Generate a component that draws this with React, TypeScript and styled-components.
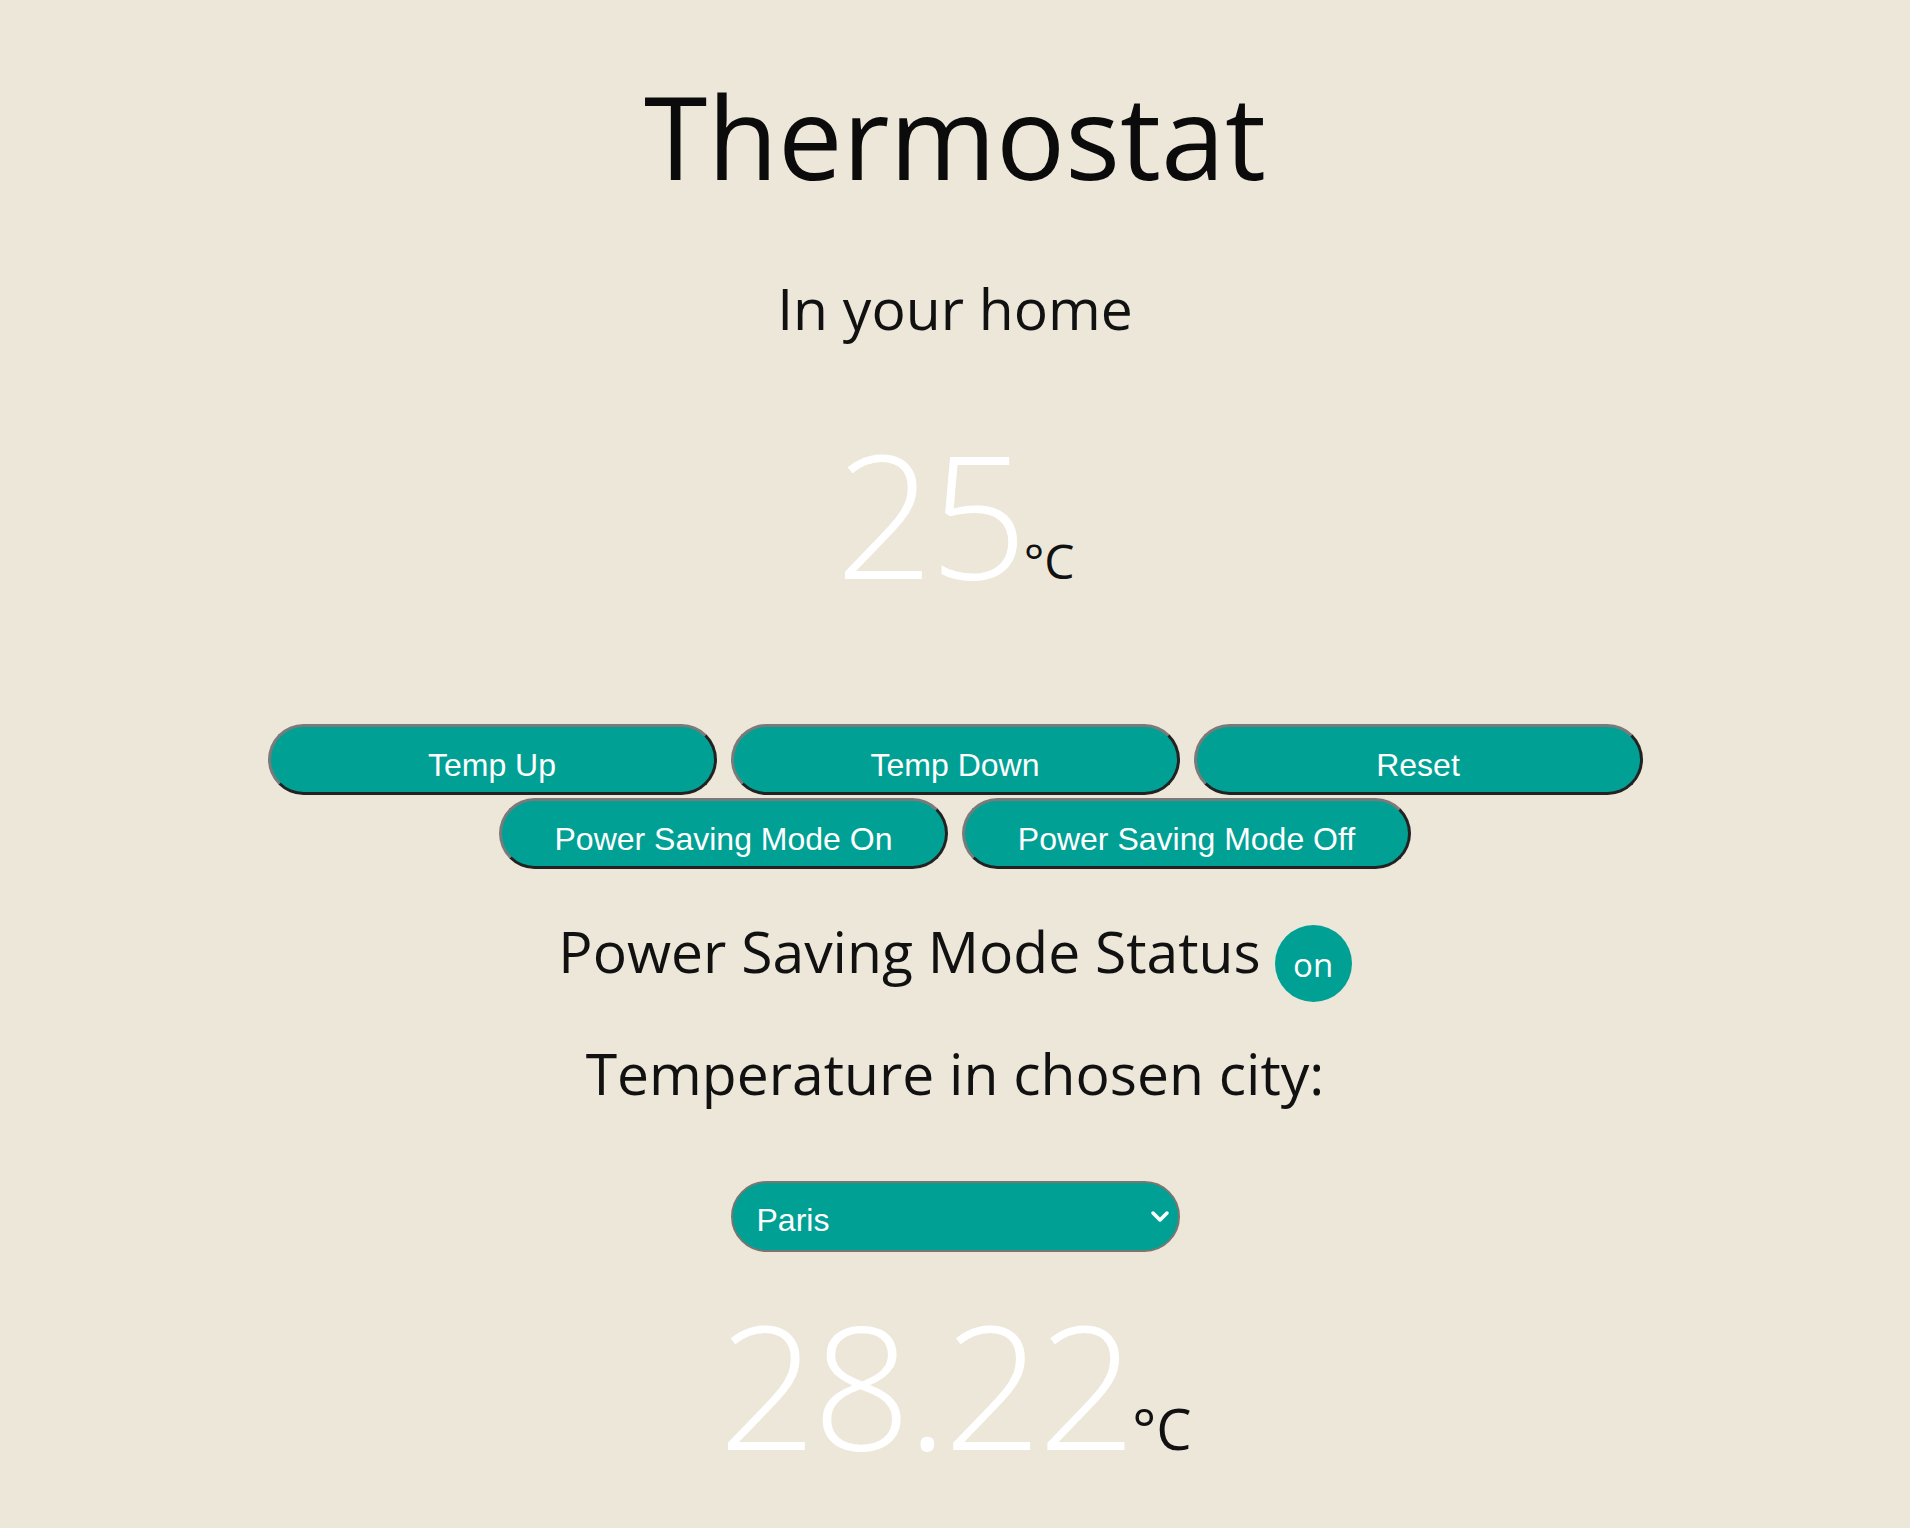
import React, { useState } from "react";
import styled, { createGlobalStyle } from "styled-components";

const TEAL = "#00a194";
const PAPER = "#ede7da";

const GlobalStyle = createGlobalStyle`
  html, body {
    margin: 0;
    padding: 0;
    background: ${PAPER};
  }

  body {
    min-height: 100vh;
    font-family: "Open Sans", "Noto Sans", sans-serif;
    color: #111;
  }
`;

const Page = styled.main`
  display: flex;
  flex-direction: column;
  align-items: center;
  padding: 78px 0 60px;
`;

const Title = styled.h1`
  margin: 0;
  font-size: 115px;
  font-weight: 400;
  line-height: 1;
  color: #0b0b0b;
`;

const Heading = styled.h2<{ $top: number }>`
  margin: ${(p) => p.$top}px 0 0;
  font-size: 57px;
  font-weight: 400;
  line-height: 1;
  color: #111;
`;

const Reading = styled.div<{ $top: number }>`
  display: flex;
  align-items: baseline;
  margin-top: ${(p) => p.$top}px;
`;

const Value = styled.span`
  font-size: 172px;
  font-weight: 300;
  line-height: 1;
  color: #fff;
  letter-spacing: -4px;
`;

const Unit = styled.span<{ $size: number }>`
  font-size: ${(p) => p.$size}px;
  font-weight: 400;
  line-height: 1;
  color: #111;
`;

const ButtonRow = styled.div<{ $top: number }>`
  display: flex;
  gap: 14px;
  margin-top: ${(p) => p.$top}px;
`;

const Button = styled.button`
  box-sizing: border-box;
  width: 449px;
  height: 71px;
  padding: 11px 0 0;
  border-width: 3px;
  border-style: solid;
  border-color: #7a7a7a #222 #222 #7a7a7a;
  border-radius: 36px;
  background: ${TEAL};
  color: #fff;
  font-family: "Liberation Sans", Arial, sans-serif;
  font-size: 32px;
  cursor: pointer;
`;

const Status = styled.div`
  display: flex;
  align-items: center;
  gap: 14px;
  margin-top: 54px;
`;

const StatusText = styled.span`
  margin-bottom: 24px;
  font-size: 57px;
  font-weight: 400;
  line-height: 1;
`;

const Badge = styled.span`
  display: flex;
  align-items: center;
  justify-content: center;
  box-sizing: border-box;
  width: 77px;
  height: 77px;
  padding-top: 1px;
  border-radius: 50%;
  background: ${TEAL};
  color: #fff;
  font-size: 33px;
  font-weight: 400;
  line-height: 1;
`;

const SelectWrap = styled.div`
  position: relative;
  margin-top: 79px;
`;

const CitySelect = styled.select`
  box-sizing: border-box;
  width: 449px;
  height: 71px;
  padding: 6px 0 0 24px;
  border: 2px solid #7b7570;
  border-radius: 36px;
  background: ${TEAL};
  color: #fff;
  font-family: "Liberation Sans", Arial, sans-serif;
  font-size: 32px;
  appearance: none;
  outline: none;
`;

const Chevron = styled.svg`
  position: absolute;
  right: 10px;
  top: 50%;
  transform: translateY(-50%);
  pointer-events: none;
`;

const cities: Record<string, string> = {
  Paris: "28.22",
  London: "19.40",
  Berlin: "23.15",
};

export default function App() {
  const [temp, setTemp] = useState(25);
  const [saving, setSaving] = useState(true);
  const [city, setCity] = useState("Paris");

  return (
    <>
      <GlobalStyle />
      <Page>
        <Title>Thermostat</Title>
        <Heading $top={87}>In your home</Heading>
        <Reading $top={89}>
          <Value>{temp}</Value>
          <Unit $size={48}>°C</Unit>
        </Reading>
        <ButtonRow $top={126}>
          <Button onClick={() => setTemp(temp + 1)}>Temp Up</Button>
          <Button onClick={() => setTemp(temp - 1)}>Temp Down</Button>
          <Button onClick={() => setTemp(20)}>Reset</Button>
        </ButtonRow>
        <ButtonRow $top={3}>
          <Button onClick={() => setSaving(true)}>Power Saving Mode On</Button>
          <Button onClick={() => setSaving(false)}>Power Saving Mode Off</Button>
        </ButtonRow>
        <Status>
          <StatusText>Power Saving Mode Status</StatusText>
          <Badge>{saving ? "on" : "off"}</Badge>
        </Status>
        <Heading $top={41}>Temperature in chosen city:</Heading>
        <SelectWrap>
          <CitySelect value={city} onChange={(e) => setCity(e.target.value)}>
            {Object.keys(cities).map((name) => (
              <option key={name} value={name}>
                {name}
              </option>
            ))}
          </CitySelect>
          <Chevron width="20" height="14" viewBox="0 0 20 14">
            <polyline
              points="3,3 10,10 17,3"
              fill="none"
              stroke="#fff"
              strokeWidth="3.5"
              strokeLinecap="round"
              strokeLinejoin="round"
            />
          </Chevron>
        </SelectWrap>
        <Reading $top={45}>
          <Value>{cities[city]}</Value>
          <Unit $size={56}>°C</Unit>
        </Reading>
      </Page>
    </>
  );
}
